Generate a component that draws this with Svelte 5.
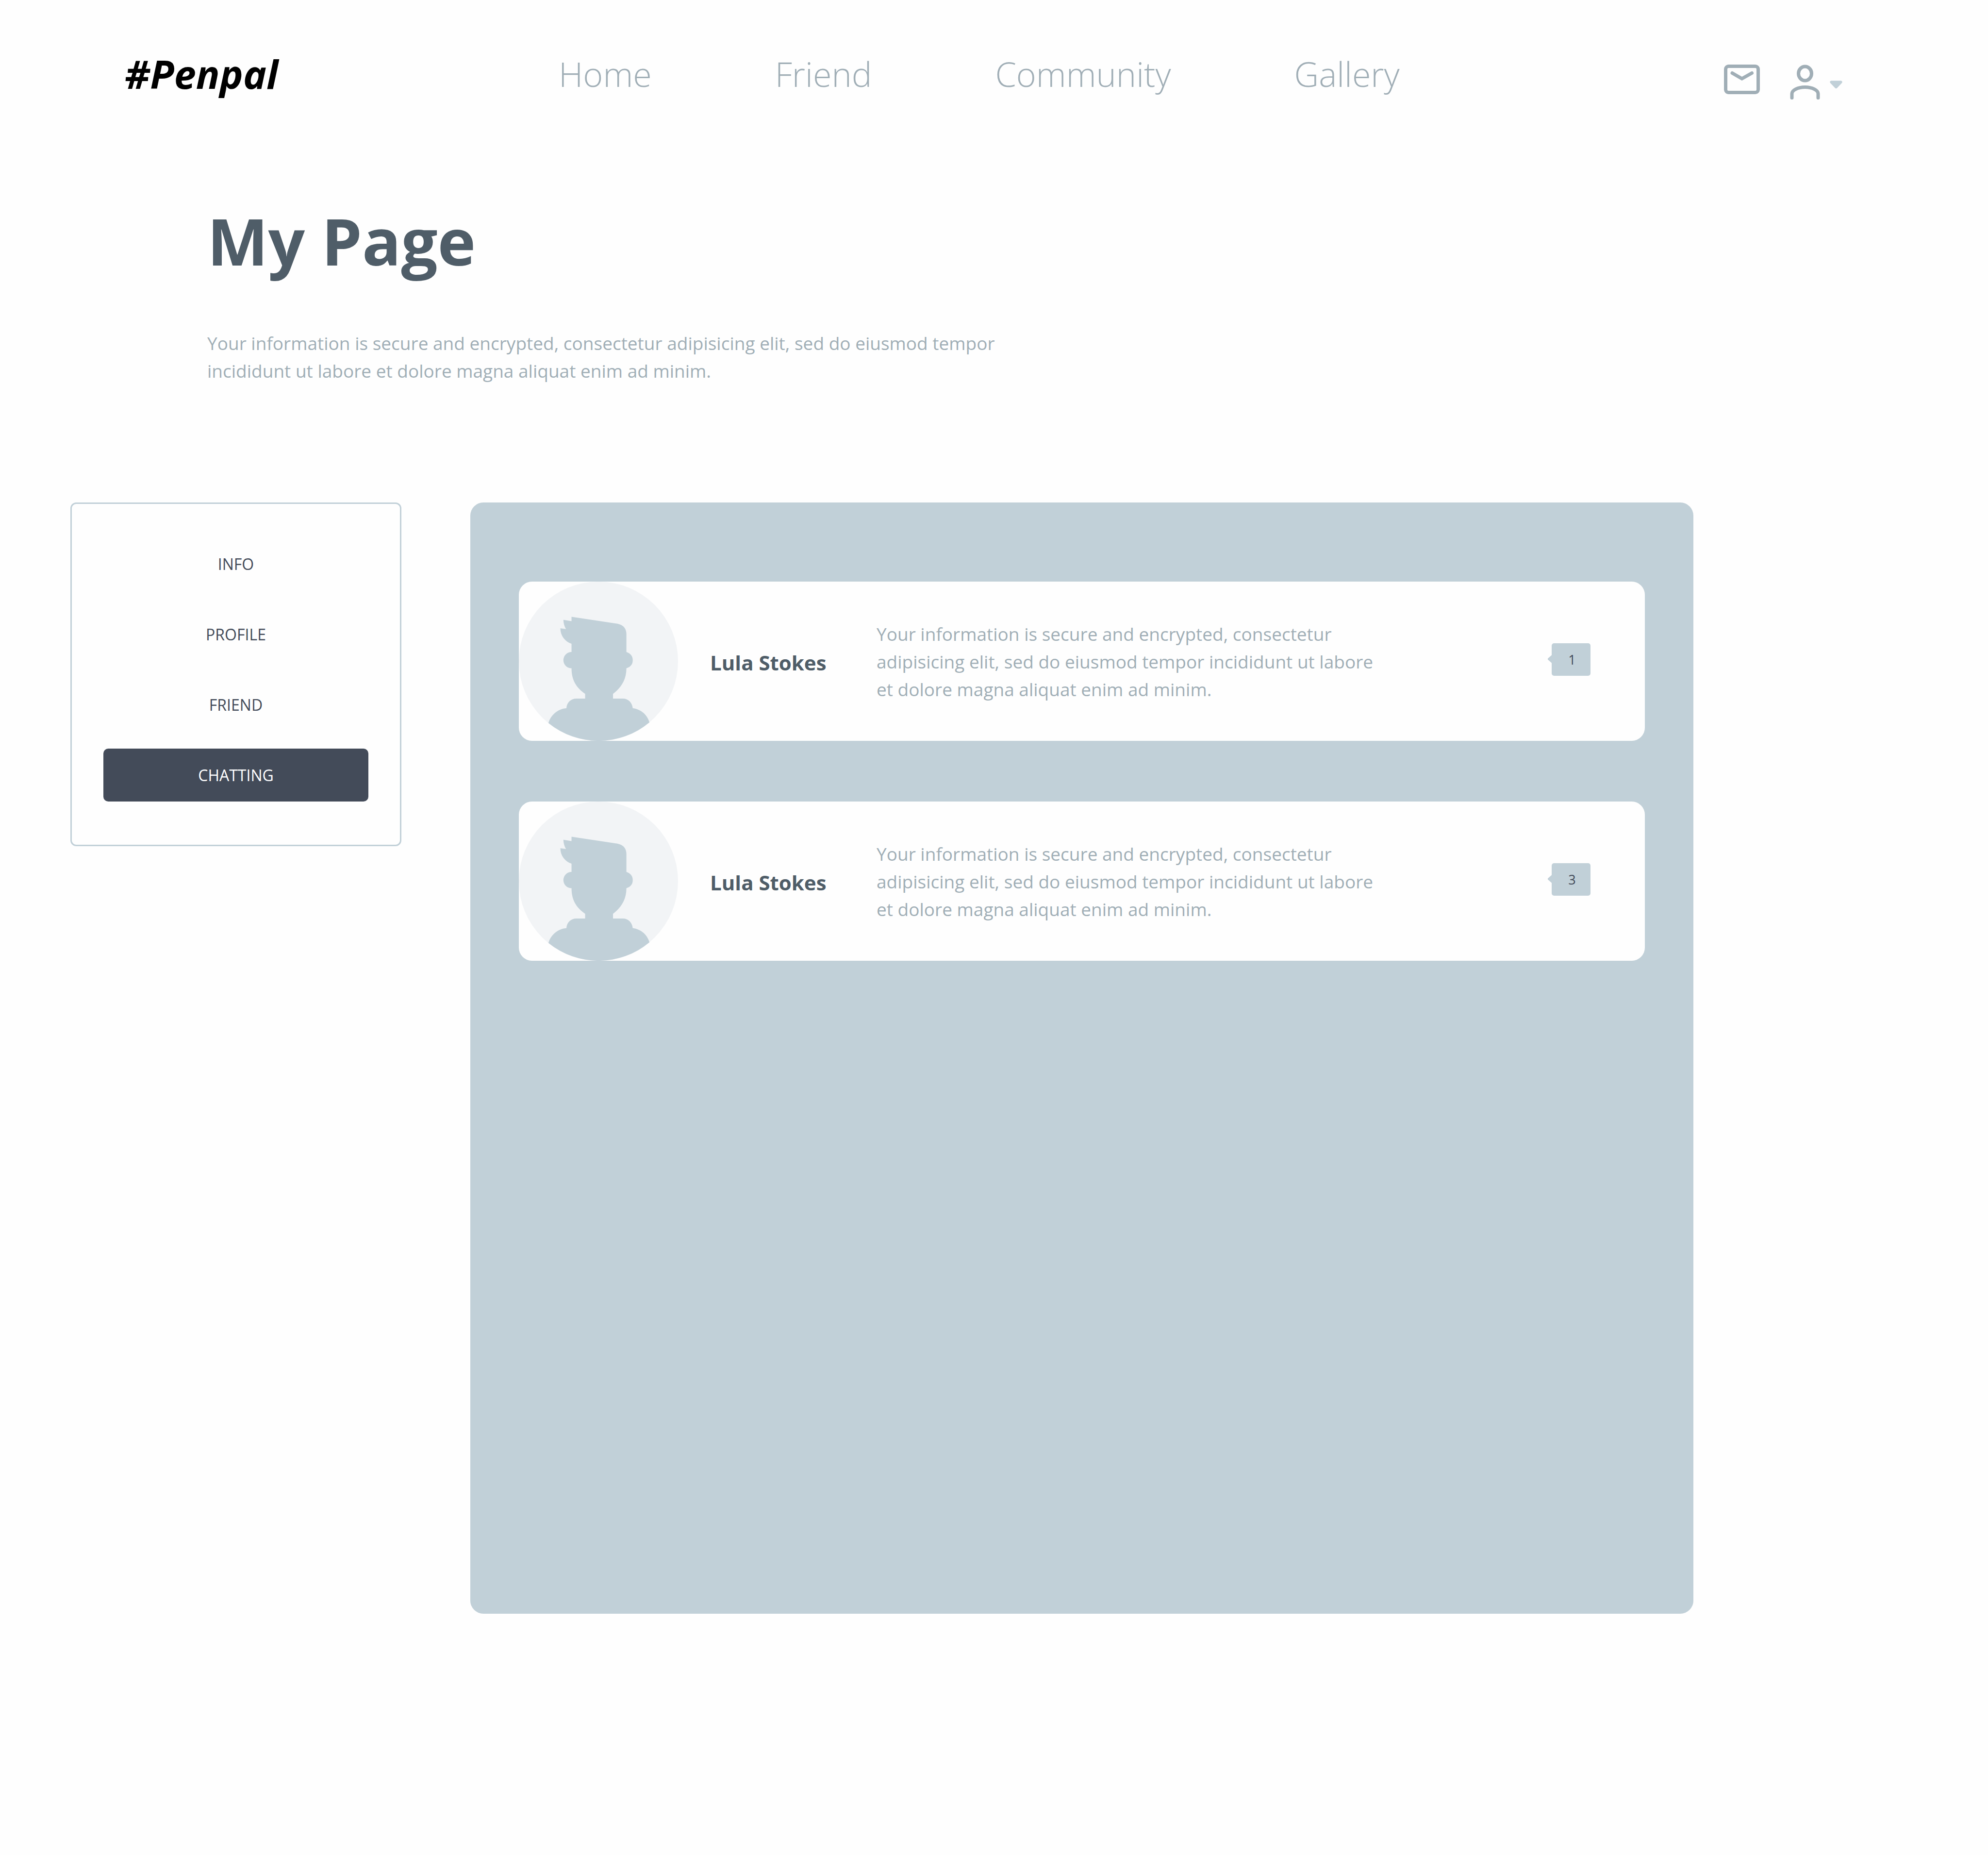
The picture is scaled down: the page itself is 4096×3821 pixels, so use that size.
<script>
  const links = ['Home', 'Friend', 'Community', 'Gallery'];
  const tabs = ['INFO', 'PROFILE', 'FRIEND', 'CHATTING'];
  let active = $state('CHATTING');

  const message =
    'Your information is secure and encrypted, consectetur adipisicing elit, sed do eiusmod tempor incididunt ut labore et dolore magna aliquat enim ad minim.';
  const chats = [
    { name: 'Lula Stokes', message, unread: 1 },
    { name: 'Lula Stokes', message, unread: 3 },
  ];
</script>

<div class="page">
  <header>
    <a class="logo" href="#home">#Penpal</a>
    <nav class="links" aria-label="Main">
      {#each links as link}
        <a href={'#' + link.toLowerCase()}>{link}</a>
      {/each}
    </nav>
    <div class="actions">
      <button class="icon" aria-label="Messages">
        <svg width="74" height="61" viewBox="0 0 74 61" fill="none" stroke="currentColor" stroke-width="7">
          <rect x="3.5" y="3.5" width="67" height="54" rx="6" />
          <path d="M17 17.5 37 29 57.500 17.5" stroke-linecap="round" />
        </svg>
      </button>
      <button class="icon account" aria-label="Account">
        <svg width="62" height="73" viewBox="0 0 62 73" fill="none" stroke="currentColor" stroke-width="7" stroke-linecap="round">
          <ellipse cx="31" cy="18.500" rx="13.500" ry="14.500" />
          <path d="M4 68.500V60C4 53 16 46.500 31 46.500S58 53 58 60V68.500" />
        </svg>
        <svg class="caret" width="26" height="17" viewBox="0 0 28 18">
          <path d="M3 0H25Q29 1 27 5L16 16.500Q14 18 12 16.500L1 5Q-1 1 3 0Z" fill="currentColor" />
        </svg>
      </button>
    </div>
  </header>

  <section class="intro">
    <h1>My Page</h1>
    <p>
      Your information is secure and encrypted, consectetur adipisicing elit, sed do eiusmod tempor
      incididunt ut labore et dolore magna aliquat enim ad minim.
    </p>
  </section>

  <main>
    <nav class="tabs" aria-label="My page">
      {#each tabs as tab}
        <button class:active={tab === active} onclick={() => (active = tab)}>{tab}</button>
      {/each}
    </nav>

    <section class="panel" aria-label="Chats">
      {#each chats as chat}
        <article>
          <svg class="avatar" viewBox="0 0 333 333" aria-hidden="true">
            <circle cx="166.500" cy="166.500" r="166.500" fill="#f2f4f6" />
            <path
              fill="#c1d0d8"
              d="M110.200 73.700 206.200 88Q225 92 225 110V147.300Q238.300 152 238.300 164.500T225 181.300C225 206 213 223 197 234.700V244.700H217.600C229 244.700 237 253 238.300 264.700C256 267 269 279 273.200 294.500A166.500 166.500 0 0 1 62 296C66 280 81 266 99.600 264.700C100 253 109 244.700 120.300 244.700H138.700V234.700C120 222 110.200 206 110.200 181.300A17 17 0 0 1 110.200 147.300V130C96 125 87 113 86.800 97.700L98.700 99.300Q93.500 91 93.200 80L110.200 82.700Z"
            />
          </svg>
          <h2>{chat.name}</h2>
          <p>{chat.message}</p>
          <span class="badge">{chat.unread}</span>
        </article>
      {/each}
    </section>
  </main>
</div>

<style>
  :global(body) {
    background: #fefefe;
  }

  .page {
    box-sizing: border-box;
    min-height: 100vh;
    font-family: 'Open Sans', 'Noto Sans', sans-serif;
    color: #a0aeb6;
  }

  a {
    color: inherit;
    text-decoration: none;
  }

  button {
    padding: 0;
    border: 0;
    background: none;
    color: inherit;
    font: inherit;
    cursor: pointer;
  }

  svg {
    display: block;
  }

  h1,
  h2,
  p {
    margin: 0;
  }

  header {
    display: flex;
    align-items: flex-start;
    padding: 100px 300px 0 257px;
    height: 120px;
  }

  .logo {
    width: 894px;
    color: #000;
    font-size: 81px;
    font-style: italic;
    font-weight: 700;
    line-height: 104px;
  }

  .links {
    display: flex;
    gap: 254px;
    font-size: 70px;
    font-weight: 300;
    line-height: 104px;
  }

  .actions {
    display: flex;
    align-items: flex-start;
    gap: 62px;
    margin: 33px 0 0 auto;
  }

  .account {
    display: flex;
    align-items: center;
    gap: 20px;
  }

  .caret {
    margin-top: 9px;
    color: #c1d0d8;
  }

  .intro {
    padding: 186px 427px 0;
  }

  h1 {
    color: #4f5d68;
    font-size: 133px;
    font-weight: 700;
    line-height: 180px;
  }

  p {
    font-size: 37px;
    line-height: 57px;
  }

  .intro p {
    max-width: 1660px;
    margin-top: 92px;
  }

  main {
    display: flex;
    align-items: flex-start;
    gap: 142px;
    padding: 243px 607px 497px 145px;
  }

  .tabs {
    display: flex;
    flex: none;
    flex-direction: column;
    gap: 36px;
    box-sizing: border-box;
    width: 682px;
    padding: 69px 65px 89px;
    border: 3px solid #c1d0d8;
    border-radius: 12px;
  }

  .tabs button {
    height: 109px;
    border-radius: 10px;
    color: #434b59;
    font-size: 32px;
  }

  .tabs .active {
    background: #434b59;
    color: #fff;
  }

  .panel {
    display: flex;
    flex: 1;
    flex-direction: column;
    gap: 125px;
    box-sizing: border-box;
    min-height: 2289px;
    padding: 163px 100px;
    border-radius: 27px;
    background: #c1d0d8;
  }

  article {
    display: flex;
    align-items: center;
    border-radius: 27px;
    background: #fefefe;
  }

  .avatar {
    flex: none;
    width: 328px;
    height: 328px;
  }

  h2 {
    width: 343px;
    margin-left: 66px;
    padding-top: 6px;
    color: #4f5d68;
    font-size: 42px;
    font-weight: 700;
    line-height: 58px;
  }

  article p {
    width: 1060px;
  }

  .badge {
    position: relative;
    box-sizing: border-box;
    width: 80px;
    margin: 0 112px 8px auto;
    padding-left: 4px;
    border-radius: 5px;
    background: #c1d0d8;
    color: #434b59;
    font-size: 27px;
    line-height: 67px;
    text-align: center;
  }

  .badge::before {
    position: absolute;
    top: 24px;
    left: -8px;
    width: 9px;
    height: 18px;
    background: #c1d0d8;
    clip-path: polygon(100% 0, 0 45%, 0 55%, 100% 100%);
    content: '';
  }
</style>
